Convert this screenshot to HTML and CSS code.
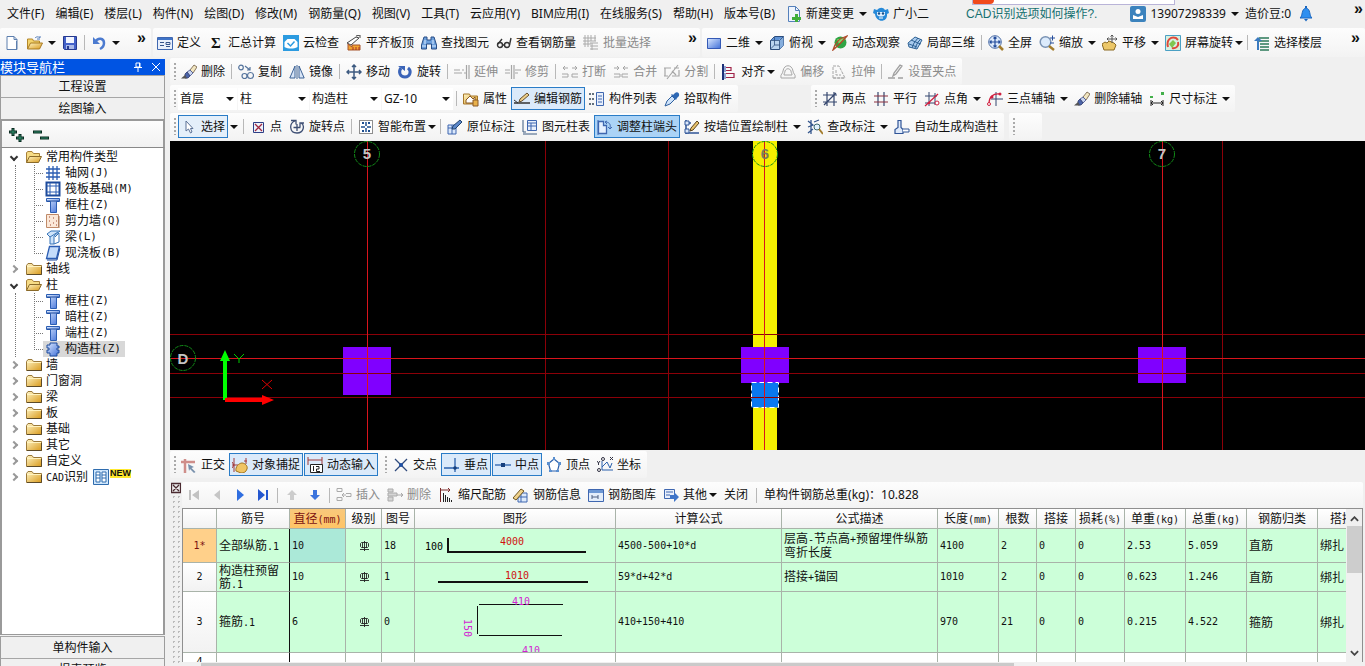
FILE: index.html
```html
<!DOCTYPE html>
<html lang="zh-CN">
<head>
<meta charset="utf-8">
<title>钢筋算量</title>
<link rel="stylesheet" href="styles.css">
</head>
<body>
<svg class="sprite" aria-hidden="true">
  <defs>
    <linearGradient id="g-gold" x1="0" y1="0" x2="1" y2="1"><stop offset="0" stop-color="#fff6c8"/><stop offset="1" stop-color="#d99a1c"/></linearGradient>
    <linearGradient id="g-blue" x1="0" y1="0" x2="1" y2="1"><stop offset="0" stop-color="#dbe9ff"/><stop offset="1" stop-color="#3f6fd8"/></linearGradient>
  </defs>
  <symbol id="new" viewBox="0 0 16 16"><path d="M3 1.500h7l3 3v10H3z" fill="#fff" stroke="#5d7fae"/><path d="M10 1.500v3h3M12.500 6v8.500H5" fill="none" stroke="#5d7fae"/></symbol>
  <symbol id="open" viewBox="0 0 16 16"><path d="M.5 14V4h5l1 2h6v3" fill="#f3d36b" stroke="#b4872a"/><path d="M.5 14l3-6h12l-3 6z" fill="url(#g-gold)" stroke="#a87a20"/><path d="M8 3c2-2 4-1 5 0V1m0 3h-3" fill="none" stroke="#4e79b8"/></symbol>
  <symbol id="opened" viewBox="0 0 16 16"><path d="M.5 13.500V3.500l1.500-1h4l1.500 2h6v3" fill="#f6dc86" stroke="#a88038"/><path d="M.5 13.500l3-6h12l-3 6z" fill="url(#g-gold)" stroke="#8a6a2a"/></symbol>
  <symbol id="folder" viewBox="0 0 16 16"><path d="M.5 13.500V4.500l1.500-2h4l1.500 2h8v9z" fill="url(#g-gold)" stroke="#9a7838"/><path d="M1 5.500h14" stroke="#fff3c0"/><path d="M1 13.500h14.500V6" fill="none" stroke="#5c4a28"/></symbol>
  <symbol id="save" viewBox="0 0 16 16"><path d="M1.500 1.500h13v13h-12l-1-1z" fill="#4361c9" stroke="#26398e"/><path d="M4 2h8v6H4z" fill="#f2f5ff"/><path d="M4 10h8v4H4z" fill="#aab9e8"/><path d="M5 11h2v3H5z" fill="#26398e"/></symbol>
  <symbol id="undo" viewBox="0 0 16 16"><path d="M2 2v7h7z" fill="#4c7bd0"/><path d="M4 7c3-5 9-4 9 1 0 3-2 5-4 6" fill="none" stroke="#4c7bd0" stroke-width="2.500"/></symbol>
  <symbol id="define" viewBox="0 0 16 16"><path d="M.5 2.500h15v12H.5z" fill="#e8effb" stroke="#3f67b0"/><path d="M1 3h14v2H1z" fill="#3f74c8"/><path d="M3 7.500h4m-4 3h4m2-3h4v2H9zm0 4h4" fill="none" stroke="#35548c"/></symbol>
  <symbol id="cloud" viewBox="0 0 16 16"><path d="M0 0h16v16H0z" fill="#2c9be0"/><path d="M1.500 12V7l3-3h7l3 3v5c-4 2-9 2-13 0z" fill="#fff"/><path d="M4.500 8l3 3 4-4.500" fill="none" stroke="#2c9be0" stroke-width="1.500"/></symbol>
  <symbol id="slab" viewBox="0 0 16 16"><path d="M1 8l9-6 3 1-8 7z" fill="#fff" stroke="#444"/><path d="M10 1l4-1v3" fill="none" stroke="#444"/><path d="M2 15V9l4 3v-2h8v5z" fill="#f3a431" stroke="#a5522b"/><path d="M7 15v-3m3 3v-3m3 3v-3" stroke="#a5322b"/></symbol>
  <symbol id="binoc" viewBox="0 0 16 16"><path d="M3 2h3v3h4V2h3l2.500 8v4h-5V9h-5v5h-5v-4z" fill="#6da0dc" stroke="#284d86"/><path d="M1 11h4m6 0h4M4 5v4m8-4v4" stroke="#dbeaff"/></symbol>
  <symbol id="glasses" viewBox="0 0 16 16"><g fill="none" stroke="#333" stroke-width="1.400"><circle cx="4" cy="10" r="2.500"/><circle cx="11" cy="10" r="2.500"/><path d="M2 9l4-5m7.500 6L15 3M6.500 10h2"/></g></symbol>
  <symbol id="batch" viewBox="0 0 16 16"><path d="M2 0v12M5 0v12M8 0v6M0 3h13M0 6h13M0 9h8M12 0v6M7 8h8m-8 3h8m-8 3h8M9 8v7" fill="none" stroke="#aaa"/></symbol>
  <symbol id="rect" viewBox="0 0 16 16"><path d="M1.500 3.500h13v10h-13z" fill="url(#g-blue)" stroke="#3459b5"/></symbol>
  <symbol id="cube" viewBox="0 0 16 16"><path d="M1.500 5.500l4-4h9v9l-4 4h-9z" fill="#b9d3ef" stroke="#2b4c7c"/><path d="M10.500 5.500l4-4v9l-4 4z" fill="#86aedd"/><path d="M2 5l4-3h8l-4 3z" fill="#5f93d6"/><path d="M1.500 5.500h9v9m0-9l4-4M5.500 2v8l-4 4M5.500 10h5" fill="none" stroke="#2b4c7c" stroke-width=".8"/></symbol>
  <symbol id="orbit" viewBox="0 0 16 16"><circle cx="8.500" cy="7.500" r="6" fill="#2fa544"/><path d="M5 4c3 1 5-2 8 0-2 3-4 2-6 5z" fill="#8ad46c"/><path d="M1 15C3 7 8 3 15 1 11 6 7 10 1 15z" fill="none" stroke="#b04b2a" stroke-width="1.300"/></symbol>
  <symbol id="part3d" viewBox="0 0 16 16"><path d="M1 8l7-6 7 3-5 9-8-2z" fill="#a9cbee" stroke="#2f6294"/><path d="M4 5l7 3 3 1M5 13l2-5 4-5M2 9l8 3M8 13l3-6 3-3" fill="none" stroke="#2f6294"/></symbol>
  <symbol id="fit" viewBox="0 0 16 16"><circle cx="7" cy="7" r="6.300" fill="#dce9fa" stroke="#4a6ba4"/><path d="M11 11l4 4" stroke="#a37c2c" stroke-width="2.500"/><path d="M7 2v10M2 7h10M5.500 3.500L7 2l1.500 1.500m-3 7L7 12l1.500-1.500m-5-5L2 7l1.500 1.500m7-3L12 7l-1.500 1.500" fill="none" stroke="#244d9c" stroke-width="1.200"/></symbol>
  <symbol id="zoom" viewBox="0 0 16 16"><circle cx="6.500" cy="7" r="5.300" fill="#dcebfc" stroke="#7a93b4" stroke-width="1.500"/><path d="M10 11l5 4" stroke="#a37c2c" stroke-width="2.500"/><path d="M11 3h5m-2.500-2.500v5M11 8h4" stroke="#244d9c"/></symbol>
  <symbol id="pan" viewBox="0 0 16 16"><path d="M2 15l-2-6 3-2 2 1 2-2 5 2 2 2-2 5z" fill="#ecc768" stroke="#8b6a22"/><path d="M10 0v8M6 4h8M8.500 1.500L10 0l1.500 1.500m-5 1L5 4l1.500 1.500m7-3L15 4l-1.500 1.500" fill="none" stroke="#555"/></symbol>
  <symbol id="screenrot" viewBox="0 0 16 16"><path d="M.5.5h15v15H.5z" fill="#d7f0e0" stroke="#4aa0c4"/><path d="M3 12C1 5 6 1 11 3l2 2m-6 8c5 1 7-3 6-6" fill="none" stroke="#e0483a" stroke-width="2"/><path d="M4 9l4-4 3 3-4 5z" fill="#7fc64f"/></symbol>
  <symbol id="floor" viewBox="0 0 16 16"><path d="M5 3h10M4 6h11M6 9h9M6 12h9M6 15h9" stroke="#2b7a5a" stroke-width="1.500"/><path d="M0 6l4-4 4 4zM3 6h2v9H3z" fill="#3a7ac0"/></symbol>
  <symbol id="change" viewBox="0 0 16 16"><path d="M2.500.5h7l4 4v11h-11z" fill="#eef4fd" stroke="#5580bb"/><path d="M9.500.5v4h4" fill="none" stroke="#5580bb"/><path d="M9 8h3v3h3v3h-3v2H9v-2H6v-3h3z" fill="#3fae3b"/></symbol>
  <symbol id="robot" viewBox="0 0 16 16"><path d="M1 3l3 1c3-3 6-3 8 0l3-1 1 4-2 1c1 9-11 9-12 0L0 7z" fill="#2689d8"/><path d="M4 6h8v3c-2 2-6 2-8 0z" fill="#dff0ff"/><circle cx="6" cy="7.500" r="1.200" fill="#174f88"/><circle cx="10" cy="7.500" r="1.200" fill="#174f88"/><path d="M6 12h4" stroke="#fff"/></symbol>
  <symbol id="user" viewBox="0 0 16 16"><rect width="16" height="16" rx="2" fill="#3c83bd"/><circle cx="8" cy="5.500" r="2.500" fill="#fff"/><path d="M3 13V9l5 2 5-2v4z" fill="#fff"/></symbol>
  <symbol id="bell" viewBox="0 0 16 16"><path d="M2 12c3-2 1-9 6-10 5 1 3 8 6 10z" fill="#2e8ff0" stroke="#1a67c0"/><path d="M6 13h4l-2 2.500z" fill="#1a67c0"/><path d="M8 0v2" stroke="#1a67c0" stroke-width="2"/></symbol>
  <symbol id="brush" viewBox="0 0 16 16"><path d="M9 6l4-5 3 2-4 6z" fill="#f2e6c0" stroke="#6a5740" stroke-width=".8"/><path d="M6 8l3-2 3 3-3 3z" fill="#c8d4ee" stroke="#44508a" stroke-width=".8"/><path d="M4 10l2-2 3 4-2 2H4z" fill="#4b64a8" stroke="#303c70" stroke-width=".8"/><path d="M0 14.500l4-3.500 2 3.500z" fill="#555"/></symbol>
  <symbol id="copy" viewBox="0 0 16 16"><g fill="none" stroke="#55749d" stroke-width="1.200"><circle cx="3" cy="3.500" r="2.300"/><circle cx="6.500" cy="12" r="2.500"/><circle cx="12.500" cy="11.500" r="3"/><path d="M7 2l5 4m0-3v3H9"/></g></symbol>
  <symbol id="mirror" viewBox="0 0 16 16"><path d="M6 2v12H.8zM10 2v12h5.200z" fill="#d8e5f7" stroke="#3d6295"/><path d="M8 1v14" stroke="#3d6295"/></symbol>
  <symbol id="move" viewBox="0 0 16 16"><path d="M8 1v14M1 8h14M6 3l2-2 2 2M6 13l2 2 2-2M3 6L1 8l2 2m10-4l2 2-2 2" fill="none" stroke="#3d5a80" stroke-width="1.500"/></symbol>
  <symbol id="rotate" viewBox="0 0 16 16"><path d="M4 4c-3 4-1 9 4 9s7-6 3-9" fill="none" stroke="#3b64b8" stroke-width="3"/><path d="M1 2h7v5z" fill="#3b64b8"/></symbol>
  <symbol id="extend" viewBox="0 0 16 16"><path d="M0 6h6m-6 3h8M8 6h2m0 3h2M12.500 1v14M15 1v14" stroke="#a6a6a6" stroke-width="1.200"/></symbol>
  <symbol id="trim" viewBox="0 0 16 16"><path d="M6.500 1v14M9 1v14M0 6h5m-5 3h5m5-3h6m-6 3h3" stroke="#a6a6a6" stroke-width="1.200"/></symbol>
  <symbol id="break" viewBox="0 0 16 16"><path d="M1 4h5M3 2L1 4l2 2m7-2h5m-2-2l2 2-2 2M0 10h6v3H0m16-3h-6v3h6" fill="none" stroke="#a6a6a6"/></symbol>
  <symbol id="join" viewBox="0 0 16 16"><path d="M1 4h5M4 2l2 2-2 2m6-2h5m-3-2l-2 2 2 2M1 10h6v3H1m14-3H9v3h6" fill="none" stroke="#a6a6a6"/></symbol>
  <symbol id="split" viewBox="0 0 16 16"><path d="M0 4h7m3 0h5M0 12h4m4 0h7V6M1 4v8m2 3L14 1M8 7l4 4" fill="none" stroke="#a6a6a6" stroke-width="1.200"/></symbol>
  <symbol id="align" viewBox="0 0 16 16"><path d="M2 0v16" stroke="#1c2f78" stroke-width="2"/><path d="M5 3.500h5v3H5M5 9.500h8v4H5" fill="none" stroke="#a02348" stroke-width="1.200"/><path d="M4 2v6m0 1v6" stroke="#2a4ea8"/></symbol>
  <symbol id="offset" viewBox="0 0 16 16"><g fill="none" stroke="#a6a6a6"><path d="M1 14c-1-4 2-4 2-7 1-7 9-7 10 0 0 3 3 3 2 7z"/><path d="M4 11c0-2 1-2 1-4 1-3 5-3 6 0 0 2 1 2 1 4z"/></g></symbol>
  <symbol id="stretch" viewBox="0 0 16 16"><path d="M2 14V2h6l6 12zM2 14h12M5 6v5h5" fill="none" stroke="#a6a6a6" stroke-dasharray="3 1"/></symbol>
  <symbol id="grip" viewBox="0 0 16 16"><path d="M0 14h7m3 0h5M5 12l1-3 6-8 2 1-6 8z" fill="none" stroke="#a0a0a0" stroke-width="1.300"/></symbol>
  <symbol id="props" viewBox="0 0 16 16"><path d="M.5 13V3h6l1 2h7v8z" fill="url(#g-gold)" stroke="#a6772a"/><path d="M3 9l4-4 3 3 2-2v6H3z" fill="#fff" stroke="#8a5b28"/><path d="M10 9h5v6h-5z" fill="#e9b14a" stroke="#8a5b28"/></symbol>
  <symbol id="rebar" viewBox="0 0 16 16"><path d="M0 12h16" stroke="#333" stroke-width="1.500"/><path d="M5 11l1-3 7-6 2 2-7 6z" fill="#edcf8a" stroke="#665030"/><path d="M0 9l4 3" stroke="#333"/></symbol>
  <symbol id="list" viewBox="0 0 16 16"><path d="M0 3h2m1 0h2M0 8h2m1 0h2m-5 5h2m1 0h2" stroke="#345" stroke-width="1.500"/><path d="M7.500 1.500h7v13h-7z" fill="#e8effb" stroke="#3f67b0"/><path d="M9 5h4M9 8h4m-4 3h4" stroke="#3f67b0"/></symbol>
  <symbol id="picker" viewBox="0 0 16 16"><path d="M1 15l2-5 5-5 3 3-5 5z" fill="#cfe3fa" stroke="#2d5f9e"/><path d="M7 4l5 5 1-2 2-2c1-3-2-5-4-3L9 4 8 3z" fill="#2e68b4"/></symbol>
  <symbol id="twopt" viewBox="0 0 16 16"><path d="M1 4h14M1 11h14M5 1v14m7-14v14M2 14L14 2" fill="none" stroke="#34466e" stroke-width="1.200"/></symbol>
  <symbol id="parallel" viewBox="0 0 16 16"><path d="M5 1v14M11 1v14" stroke="#34466e" stroke-width="1.200"/><path d="M1 5h14M1 11h14" stroke="#8c3040" stroke-width="1.200"/></symbol>
  <symbol id="angle" viewBox="0 0 16 16"><path d="M1 5h12M5 1v14M1 12h14M11 2v12" stroke="#34466e" fill="none"/><path d="M1 15L14 3" stroke="#d02040" stroke-width="1.300"/><circle cx="13" cy="12" r="2" fill="#fff" stroke="#d02040"/><circle cx="5" cy="12" r="1.300" fill="#d02040"/></symbol>
  <symbol id="threept" viewBox="0 0 16 16"><path d="M9 1v14M4 8h12" stroke="#34466e"/><path d="M2 13C2 6 6 2 13 3" fill="none" stroke="#d02040" stroke-width="1.400"/><circle cx="2" cy="13" r="1.500" fill="#fff" stroke="#d02040"/><circle cx="5" cy="6" r="1.500" fill="#d02040"/><circle cx="13" cy="3" r="1.500" fill="#d02040"/></symbol>
  <symbol id="dim" viewBox="0 0 16 16"><path d="M2 9v6m12-6v6M2 12h12M4 10l-2 2 2 2m8-4l2 2-2 2" fill="none" stroke="#222"/><path d="M1 5h3v2H1zm11-4h3v3h-3z" fill="#43b04a"/></symbol>
  <symbol id="cursor" viewBox="0 0 16 16"><path d="M5 2v10l2.500-2 2 4 1.500-1-1.500-3.500H12z" fill="#fff" stroke="#5b7196"/></symbol>
  <symbol id="point" viewBox="0 0 16 16"><path d="M3.500 3.500h10v10h-10z" fill="#eef3fc" stroke="#2d3f86"/><path d="M5 5l7 7m0-7l-7 7" stroke="#a02840" stroke-width="1.300"/></symbol>
  <symbol id="rotpoint" viewBox="0 0 16 16"><path d="M6 2C0 4 0 14 8 14c7 0 8-8 4-10M2 1.500h5v4M15 4h-4v4M8 5v7M4.500 8.500h7" fill="none" stroke="#3e4f74" stroke-width="1.300"/></symbol>
  <symbol id="smart" viewBox="0 0 16 16"><path d="M1.500 1.500h13v13h-13z" fill="#fff" stroke="#222" stroke-dasharray="1 1"/><path d="M8 3v4m0 2v4M3 8h4m2 0h4" stroke="#1c4d8f" stroke-width="1.500"/><path d="M4 3h2v2H4zm6 0h2v2h-2zm-6 8h2v2H4zm6 0h2v2h-2z" fill="#1c4d8f"/></symbol>
  <symbol id="inplace" viewBox="0 0 16 16"><path d="M1 6h8v9H1z" fill="#dbe8fa" stroke="#3f67b0"/><path d="M1 9h8M5 6v9" stroke="#3f67b0"/><path d="M5 10l1-3 7-6 2 2-7 7z" fill="#5c87c9" stroke="#23446f"/></symbol>
  <symbol id="coltable" viewBox="0 0 16 16"><path d="M1 1v12M1 15h14M4 13h-3" stroke="#3d5a80" fill="none"/><path d="M5.500 1.500h9v10h-9z" fill="#e8effb" stroke="#3f67b0"/><path d="M6 4h8M6 7h8M9 4v7" stroke="#3f67b0"/></symbol>
  <symbol id="adjust" viewBox="0 0 16 16"><path d="M1.500 2.500h5v4h3v8h-8z" fill="#e5f0ff" stroke="#3f67b0" stroke-width="1.300"/><path d="M8 3c4 0 6 2 5 6m-3-7L8 3l2 2m1 3l2 2 2-2M1 1v15" fill="none" stroke="#3f67b0"/></symbol>
  <symbol id="bywall" viewBox="0 0 16 16"><path d="M2 1v14M2 4h5M2 14h13" stroke="#2f5497" stroke-width="1.500"/><path d="M1 2h4v4H1zm0 8h4v4H1z" fill="#dce8fa" stroke="#2f5497"/><path d="M6 12l1-3 6-7 2 2-6 7z" fill="#e9c36b" stroke="#5b4520"/></symbol>
  <symbol id="check" viewBox="0 0 16 16"><path d="M1 2l5 4-5 2m0 6l5-4M4 1v14M7 3l5-2" fill="none" stroke="#34568c" stroke-width="1.300"/><circle cx="10" cy="8" r="3" fill="#e2f2ff" stroke="#3d6a70"/><path d="M12 10l4 5" stroke="#a37c2c" stroke-width="2"/></symbol>
  <symbol id="autogen" viewBox="0 0 16 16"><path d="M4 1.500h3v7l2 2v4H1v-4l3-2z" fill="#dfeafa" stroke="#2f5497" stroke-width="1.200"/><path d="M9 10h6v3H9" fill="#fff" stroke="#2f5497"/></symbol>
  <symbol id="ortho" viewBox="0 0 16 16"><path d="M4 16V2m-4 3h14" stroke="#cf8e8a" stroke-width="2.500"/><path d="M7 7l6 3-2.500 1 4 4-1.500 1-4-4-1 2z" fill="#7890ac"/></symbol>
  <symbol id="osnap" viewBox="0 0 16 16"><path d="M2 1v14M0 8h6M14 1v6" stroke="#a03838"/><path d="M4 14c-1-4 3-8 6-8s6 3 5 6-3 4-6 4z" fill="#f0c463" stroke="#a37520"/><path d="M12 4h3M0 5l2 3-2 3" stroke="#a03838" fill="none"/></symbol>
  <symbol id="dyn" viewBox="0 0 16 16"><path d="M1 0v8m14-8v8M1 3h14" stroke="#a03838"/><path d="M3.500 7.500h12v8h-12z" fill="#fff" stroke="#222"/><path d="M6.500 9v5M9 9.500h3V12H9.500v2.500H13" fill="none" stroke="#222"/></symbol>
  <symbol id="cross" viewBox="0 0 16 16"><path d="M2 2l12 12M14 2L2 14" stroke="#2f4a7c" stroke-width="1.300"/><circle cx="8" cy="8" r="2" fill="#1d4fa4"/></symbol>
  <symbol id="perp" viewBox="0 0 16 16"><path d="M11 1v14M0 11h15" stroke="#2b61ad" stroke-width="1.300"/><circle cx="11" cy="11" r="1.800" fill="#16407e"/></symbol>
  <symbol id="mid" viewBox="0 0 16 16"><path d="M0 8h16" stroke="#2b61ad" stroke-width="1.300"/><path d="M6 6h4v4H6z" fill="#16407e"/></symbol>
  <symbol id="vertex" viewBox="0 0 16 16"><path d="M8 2l5.500 4.500-2 7.500h-7l-2-7.500z" fill="#fff" stroke="#2b61ad" stroke-width="1.200"/><path d="M7 0h2v3H7zM1 5h3v3H1zm11 0h3v3h-3zM3 13h3v2H3zm7 0h3v2h-3z" fill="#5a8fcf"/></symbol>
  <symbol id="coord" viewBox="0 0 16 16"><path d="M5 4v9h11M5 10l5-5 3 6 2-5" fill="none" stroke="#2b61ad"/><path d="M0 4l1.500 2L3 4M1.500 6v2M13 0l3 3m0-3l-3 3" stroke="#334" fill="none"/><circle cx="2" cy="13" r="1.500" fill="none" stroke="#334"/><circle cx="6" cy="2" r="1.500" fill="none" stroke="#334"/></symbol>
  <symbol id="first" viewBox="0 0 16 16"><path d="M3 3h2v10H3zm10 0v10L6 8z" fill="#c2c2c2"/></symbol>
  <symbol id="prev" viewBox="0 0 16 16"><path d="M11 3v10L5 8z" fill="#c6c6c6"/></symbol>
  <symbol id="next" viewBox="0 0 16 16"><path d="M5 2v12l7-6z" fill="#2f6ee0"/></symbol>
  <symbol id="last" viewBox="0 0 16 16"><path d="M3 2v12l7-6zM11 3h2v10h-2z" fill="#2457cf"/></symbol>
  <symbol id="up" viewBox="0 0 16 16"><path d="M8 3l5 5h-3v5H6V8H3z" fill="#ccc"/></symbol>
  <symbol id="down" viewBox="0 0 16 16"><path d="M8 13l5-5h-3V3H6v5H3z" fill="#3c74dd"/></symbol>
  <symbol id="insert" viewBox="0 0 16 16"><path d="M1 1.500h5v3H1zm0 9h5v3H1zm9-4h5v3h-5M6 8h4M8 6L6 8l2 2" fill="none" stroke="#aaa"/></symbol>
  <symbol id="remove" viewBox="0 0 16 16"><path d="M1 2h5v3H1zm0 8h5v4H1zm0-4h9v3H1zm9 2h6m-2-2l2 2-2 2" fill="#d6d6d6" stroke="#aaa"/></symbol>
  <symbol id="scale" viewBox="0 0 16 16"><path d="M2.500 1v14M3 3h9m-2-2l2 2-2 2" stroke="#7c2a2a" fill="none"/><path d="M5.500 15V6m2 9V8m2 7v-5m2 5v-4m2 4v-2" stroke="#222"/></symbol>
  <symbol id="info" viewBox="0 0 16 16"><path d="M5 6h9v9H5z" fill="#dce9fa" stroke="#3f67b0"/><path d="M8 6v9M5 10h9" stroke="#3f67b0"/><path d="M0 11l8-9 3 2-8 9z" fill="#f0d28a" stroke="#6f5520"/></symbol>
  <symbol id="lib" viewBox="0 0 16 16"><path d="M.5 2.500h15v12H.5z" fill="#e3edfa" stroke="#3f67b0"/><path d="M1 3h14v3H1z" fill="#6c97d4"/><path d="M4 8v4m0-2h6m0-2v4" fill="none" stroke="#4c5e80"/></symbol>
  <symbol id="other" viewBox="0 0 16 16"><path d="M1.500 2.500h10v9h-10z" fill="#e8effb" stroke="#3f67b0"/><path d="M3 5h7M3 8h4" stroke="#3f67b0"/><path d="M7 8h4V5l5 5-5 5v-3H7z" fill="#3f74c8"/></symbol>
  <symbol id="gridaxis" viewBox="0 0 16 16"><path d="M4 1v14M8 1v14M12 1v14M1 4h14M1 8h14M1 12h14" stroke="#2b5db3" stroke-width="1.300"/></symbol>
  <symbol id="raft" viewBox="0 0 16 16"><path d="M1.500 1.500h13v13h-13z" fill="#fff" stroke="#1d4b9c" stroke-width="2"/><path d="M5 2v12m6-12v12M2 5h12M2 11h12" stroke="#2b5db3"/></symbol>
  <symbol id="column" viewBox="0 0 16 16"><path d="M1.500 1.500h13v3h-3v11h-6v-11h-4z" fill="url(#g-blue)" stroke="#2b5db3"/><path d="M2 4h12" stroke="#1d4b9c"/></symbol>
  <symbol id="wall" viewBox="0 0 16 16"><path d="M1.500 1.500h12v13h-12z" fill="#fbe8d8" stroke="#c08a68"/><path d="M4 4h1m3 1h1m2 3h1M4 8h1m3 2h1m-4 2h1m5 0h1" stroke="#a04830"/><path d="M14 3v12" stroke="#a87858"/></symbol>
  <symbol id="beam" viewBox="0 0 16 16"><path d="M2 5l4-3h9L9 7v8H5V8z" fill="#cfe4fa" stroke="#3774b8"/><path d="M5 8l8-5M10 8l4-4v9l-5 2" fill="none" stroke="#3774b8"/></symbol>
  <symbol id="plate" viewBox="0 0 16 16"><path d="M4.500 1.500h10l-3 12h-10z" fill="#c4dcfa" stroke="#2b5db3" stroke-width="1.300"/><path d="M2 15h10l3-12" fill="none" stroke="#1d4b9c"/></symbol>
  <symbol id="struct" viewBox="0 0 16 16"><path d="M5 2h7v3h2v2h-2v2h2v3h-2v3H5v-3H2V9h2V7H2V4h3z" fill="url(#g-blue)" stroke="#1d4b9c"/></symbol>
  <symbol id="cad" viewBox="0 0 16 16"><path d="M.5.5h15v15H.5z" fill="#cfe6fb" stroke="#2f6cae"/><path d="M3 3h4v10H3zm6 0h4v10H9zM3 6h4m2 0h4M3 9h4m2 0h4" fill="#fff" stroke="#2f6cae"/></symbol>
  <symbol id="steel" viewBox="0 0 12 12"><path d="M6.500 1v10M4.500 3v5M8.500 3v5M3.500 2.500h6l1 1v3l-1 1h-6l-1-1v-3zM2 9.500h9" fill="none" stroke="#222" stroke-width=".9"/></symbol>
</svg>

<header class="menubar">
  <nav class="menus">
    <button>文件(F)</button><button>编辑(E)</button><button>楼层(L)</button><button>构件(N)</button><button>绘图(D)</button><button>修改(M)</button><button>钢筋量(Q)</button><button>视图(V)</button><button>工具(T)</button><button>云应用(Y)</button><button>BIM应用(I)</button><button>在线服务(S)</button><button>帮助(H)</button><button>版本号(B)</button>
  </nav>
  <div class="group">
    <button class="tb"><svg><use href="#change"/></svg>新建变更</button><button class="split" aria-label="新建变更选项"><i></i></button>
    <button class="tb"><svg><use href="#robot"/></svg>广小二</button>
  </div>
  <a class="tip" href="#"><span class="mono">CAD</span>识别选项如何操作<span class="mono">?.</span></a>
  <div class="group account">
    <button class="tb"><svg><use href="#user"/></svg>13907298339</button><button class="split" aria-label="账户"><i></i></button>
    <button class="tb">造价豆:0</button>
    <button class="tb" aria-label="通知"><svg><use href="#bell"/></svg></button>
  </div>
  <button class="more end" aria-label="更多">»</button>
  <div class="popup"></div>
</header>

<div class="mainbar">
  <div class="bar">
    <button class="tb" aria-label="新建"><svg><use href="#new"/></svg></button>
    <button class="tb" aria-label="打开"><svg><use href="#open"/></svg></button><button class="split" aria-label="最近"><i></i></button>
    <button class="tb" aria-label="保存"><svg><use href="#save"/></svg></button><hr>
    <button class="tb" aria-label="撤销"><svg><use href="#undo"/></svg></button><button class="split" aria-label="撤销列表"><i></i></button>
    <button class="more near" aria-label="更多">»</button>
  </div>
  <div class="bar">
    <button class="tb"><svg><use href="#define"/></svg>定义</button>
    <button class="tb"><b class="sigma">Σ</b>汇总计算</button>
    <button class="tb"><svg><use href="#cloud"/></svg>云检查</button>
    <button class="tb"><svg><use href="#slab"/></svg>平齐板顶</button>
    <button class="tb"><svg><use href="#binoc"/></svg>查找图元</button>
    <button class="tb"><svg><use href="#glasses"/></svg>查看钢筋量</button>
    <button class="tb" disabled><svg><use href="#batch"/></svg>批量选择</button>
    <button class="more far" aria-label="更多">»</button>
  </div>
  <div class="bar grow">
    <button class="tb"><svg><use href="#rect"/></svg>二维</button><button class="split" aria-label="视图模式"><i></i></button>
    <button class="tb"><svg><use href="#cube"/></svg>俯视</button><button class="split" aria-label="视角"><i></i></button>
    <button class="tb"><svg><use href="#orbit"/></svg>动态观察</button>
    <button class="tb"><svg><use href="#part3d"/></svg>局部三维</button><hr>
    <button class="tb"><svg><use href="#fit"/></svg>全屏</button>
    <button class="tb"><svg><use href="#zoom"/></svg>缩放</button><button class="split" aria-label="缩放选项"><i></i></button>
    <button class="tb"><svg><use href="#pan"/></svg>平移</button><button class="split" aria-label="平移选项"><i></i></button>
    <button class="tb"><svg><use href="#screenrot"/></svg>屏幕旋转<i></i></button><hr>
    <button class="tb"><svg><use href="#floor"/></svg>选择楼层</button>
    <button class="more end" aria-label="更多">»</button>
  </div>
</div>

<div class="workspace">
  <aside class="nav">
    <h1>模块导航栏<button aria-label="固定"><svg viewBox="0 0 10 10"><path d="M3 1h4v4H3zM1 5.500h8M5 6v4M6.500 1v4" fill="none" stroke="#fff"/></svg></button><button aria-label="关闭"><svg viewBox="0 0 10 10"><path d="M1 1l8 8M9 1L1 9" fill="none" stroke="#fff"/></svg></button></h1>
    <button class="section">工程设置</button>
    <button class="section">绘图输入</button>
    <div class="treetools">
      <button aria-label="全部展开"><svg viewBox="0 0 18 16"><path d="M1 5h8M5 1v8M8 11h8m-4-4v8" stroke="#0a2a20" stroke-width="3"/><path d="M2 5h6M5 2v6m4 3h6m-3-3v6" stroke="#2f8f6c"/></svg></button>
      <button aria-label="全部折叠"><svg viewBox="0 0 18 16"><path d="M1 5h9M8 11h9" stroke="#0a2a20" stroke-width="3"/><path d="M2 5h7m0 6h7" stroke="#2f8f6c"/></svg></button>
    </div>
    <ul class="tree">
      <li class="open"><span class="row"><s></s><svg><use href="#opened"/></svg>常用构件类型</span>
        <ul>
          <li><span class="leaf"><svg><use href="#gridaxis"/></svg>轴网<span class="mono">(J)</span></span></li>
          <li><span class="leaf"><svg><use href="#raft"/></svg>筏板基础<span class="mono">(M)</span></span></li>
          <li><span class="leaf"><svg><use href="#column"/></svg>框柱<span class="mono">(Z)</span></span></li>
          <li><span class="leaf"><svg><use href="#wall"/></svg>剪力墙<span class="mono">(Q)</span></span></li>
          <li><span class="leaf"><svg><use href="#beam"/></svg>梁<span class="mono">(L)</span></span></li>
          <li><span class="leaf"><svg><use href="#plate"/></svg>现浇板<span class="mono">(B)</span></span></li>
        </ul>
      </li>
      <li><span class="row"><s></s><svg><use href="#folder"/></svg>轴线</span></li>
      <li class="open"><span class="row"><s></s><svg><use href="#opened"/></svg>柱</span>
        <ul>
          <li><span class="leaf"><svg><use href="#column"/></svg>框柱<span class="mono">(Z)</span></span></li>
          <li><span class="leaf"><svg><use href="#column"/></svg>暗柱<span class="mono">(Z)</span></span></li>
          <li><span class="leaf"><svg><use href="#column"/></svg>端柱<span class="mono">(Z)</span></span></li>
          <li><span class="leaf chosen"><svg><use href="#struct"/></svg>构造柱<span class="mono">(Z)</span></span></li>
        </ul>
      </li>
      <li><span class="row"><s></s><svg><use href="#folder"/></svg>墙</span></li>
      <li><span class="row"><s></s><svg><use href="#folder"/></svg>门窗洞</span></li>
      <li><span class="row"><s></s><svg><use href="#folder"/></svg>梁</span></li>
      <li><span class="row"><s></s><svg><use href="#folder"/></svg>板</span></li>
      <li><span class="row"><s></s><svg><use href="#folder"/></svg>基础</span></li>
      <li><span class="row"><s></s><svg><use href="#folder"/></svg>其它</span></li>
      <li><span class="row"><s></s><svg><use href="#folder"/></svg>自定义</span></li>
      <li><span class="row"><s></s><svg><use href="#folder"/></svg><span><span class="mono">CAD</span>识别</span><svg class="after"><use href="#cad"/></svg><em>NEW</em></span></li>
    </ul>
    <button class="section">单构件输入</button>
    <button class="section last">报表预览</button>
  </aside>

  <main>
    <div class="line">
      <div class="bar">
        <span class="handle"></span>
        <button class="tb"><svg><use href="#brush"/></svg>删除</button><hr>
        <button class="tb"><svg><use href="#copy"/></svg>复制</button>
        <button class="tb"><svg><use href="#mirror"/></svg>镜像</button><hr>
        <button class="tb"><svg><use href="#move"/></svg>移动</button>
        <button class="tb"><svg><use href="#rotate"/></svg>旋转</button><hr>
        <button class="tb" disabled><svg><use href="#extend"/></svg>延伸</button>
        <button class="tb" disabled><svg><use href="#trim"/></svg>修剪</button><hr>
        <button class="tb" disabled><svg><use href="#break"/></svg>打断</button>
        <button class="tb" disabled><svg><use href="#join"/></svg>合并</button>
        <button class="tb" disabled><svg><use href="#split"/></svg>分割</button><hr>
        <button class="tb"><svg><use href="#align"/></svg>对齐<i></i></button>
        <button class="tb" disabled><svg><use href="#offset"/></svg>偏移</button>
        <button class="tb" disabled><svg><use href="#stretch"/></svg>拉伸</button><hr>
        <button class="tb" disabled><svg><use href="#grip"/></svg>设置夹点</button>
      </div>
    </div>
    <div class="line">
      <div class="bar">
        <span class="handle"></span>
        <label class="pick short"><select aria-label="楼层"><option>首层</option></select><i></i></label>
        <label class="pick"><select aria-label="构件类型"><option>柱</option></select><i></i></label>
        <label class="pick"><select aria-label="柱类型"><option>构造柱</option></select><i></i></label>
        <label class="pick"><select aria-label="构件"><option>GZ-10</option></select><i></i></label><hr>
        <button class="tb"><svg><use href="#props"/></svg>属性</button>
        <button class="tb on"><svg><use href="#rebar"/></svg>编辑钢筋</button>
        <button class="tb"><svg><use href="#list"/></svg>构件列表</button>
        <button class="tb"><svg><use href="#picker"/></svg>拾取构件</button>
      </div>
      <div class="bar axis">
        <span class="handle"></span>
        <button class="tb"><svg><use href="#twopt"/></svg>两点</button>
        <button class="tb"><svg><use href="#parallel"/></svg>平行</button>
        <button class="tb"><svg><use href="#angle"/></svg>点角</button><button class="split" aria-label="点角选项"><i></i></button>
        <button class="tb"><svg><use href="#threept"/></svg>三点辅轴</button><button class="split" aria-label="三点辅轴选项"><i></i></button>
        <button class="tb"><svg><use href="#brush"/></svg>删除辅轴</button>
        <button class="tb"><svg><use href="#dim"/></svg>尺寸标注</button><button class="split" aria-label="尺寸标注选项"><i></i></button>
      </div>
    </div>
    <div class="line">
      <div class="bar">
        <span class="handle"></span>
        <button class="tb on pale"><svg><use href="#cursor"/></svg>选择</button><button class="split" aria-label="选择选项"><i></i></button><hr>
        <button class="tb"><svg><use href="#point"/></svg>点</button>
        <button class="tb"><svg><use href="#rotpoint"/></svg>旋转点</button><hr>
        <button class="tb"><svg><use href="#smart"/></svg>智能布置<i></i></button><hr>
        <button class="tb"><svg><use href="#inplace"/></svg>原位标注</button>
        <button class="tb"><svg><use href="#coltable"/></svg>图元柱表</button>
        <button class="tb on deep"><svg><use href="#adjust"/></svg>调整柱端头</button>
        <button class="tb"><svg><use href="#bywall"/></svg>按墙位置绘制柱</button><button class="split" aria-label="绘制柱选项"><i></i></button>
        <button class="tb"><svg><use href="#check"/></svg>查改标注</button><button class="split" aria-label="查改标注选项"><i></i></button>
        <button class="tb"><svg><use href="#autogen"/></svg>自动生成构造柱</button>
      </div>
      <div class="bar stub"><span class="handle"></span></div>
    </div>

    <svg class="canvas" viewBox="0 0 1195 309" preserveAspectRatio="xMinYMin slice">
      <path d="M583 0h24v309h-24z" fill="#f4f000"/>
      <path d="M173 206h48v48h-48zM571 206h48v36h-48zM968 206h48v36h-48z" fill="#8000ff"/>
      <path d="M581.500 241.500h27v25h-27z" fill="#0a78f0" stroke="#fff" stroke-dasharray="5 3"/>
      <path d="M375.500 0v309M498.500 0v309M1052.500 0v309M0 193.500h1195M0 232.500h1195M0 256.500h1195" class="grid-dark"/>
      <path d="M197.500 0v309M594.500 0v309M992.500 0v309M0 217.500h1195" class="grid-red"/>
      <g class="bubble"><circle cx="197" cy="13" r="12.500"/><circle cx="595" cy="13" r="12.500"/><circle cx="992" cy="13" r="12.500"/><circle cx="13" cy="217" r="12.500"/></g>
      <g class="axis-name"><text x="197" y="18">5</text><text x="595" y="18" class="dim">6</text><text x="992" y="18">7</text><text x="13" y="223">D</text></g>
      <path d="M53 220v39h4v-39h3l-5-11-5 11z" fill="#0f0"/>
      <path d="M57 257h35v-3l12 5-12 5v-3H55v-4z" fill="#f00"/>
      <path d="M64 213l5 5 5-5M69 218v4" fill="none" stroke="#0c0"/>
      <path d="M92 239l10 9M102 239l-10 9" stroke="#d00"/>
    </svg>

    <div class="line snap">
      <div class="bar">
        <span class="handle"></span>
        <button class="tb"><svg><use href="#ortho"/></svg>正交</button>
        <button class="tb on"><svg><use href="#osnap"/></svg>对象捕捉</button><button class="tb on"><svg><use href="#dyn"/></svg>动态输入</button>
        <span class="handle wide"></span>
        <button class="tb"><svg><use href="#cross"/></svg>交点</button>
        <button class="tb on"><svg><use href="#perp"/></svg>垂点</button><button class="tb on"><svg><use href="#mid"/></svg>中点</button>
        <button class="tb"><svg><use href="#vertex"/></svg>顶点</button>
        <button class="tb"><svg><use href="#coord"/></svg>坐标</button>
      </div>
    </div>

    <section class="dock">
      <div class="gutter"><button aria-label="关闭面板"><svg viewBox="0 0 10 10"><path d="M.5.5h9v9h-9zM2 2l6 6M8 2L2 8" fill="#eee" stroke="#4a2a30" stroke-width="1.300"/></svg></button></div>
      <div class="dockbody">
        <div class="bar records">
          <button class="tb" disabled aria-label="首条"><svg><use href="#first"/></svg></button>
          <button class="tb" disabled aria-label="上一条"><svg><use href="#prev"/></svg></button>
          <button class="tb" aria-label="下一条"><svg><use href="#next"/></svg></button>
          <button class="tb" aria-label="末条"><svg><use href="#last"/></svg></button><hr>
          <button class="tb" disabled aria-label="上移"><svg><use href="#up"/></svg></button>
          <button class="tb" aria-label="下移"><svg><use href="#down"/></svg></button><hr>
          <button class="tb" disabled><svg><use href="#insert"/></svg>插入</button>
          <button class="tb" disabled><svg><use href="#remove"/></svg>删除</button>
          <button class="tb"><svg><use href="#scale"/></svg>缩尺配筋</button>
          <button class="tb"><svg><use href="#info"/></svg>钢筋信息</button>
          <button class="tb"><svg><use href="#lib"/></svg>钢筋图库</button>
          <button class="tb"><svg><use href="#other"/></svg>其他<i></i></button>
          <button class="tb shut">关闭</button><hr>
          <span class="total">单构件钢筋总重(kg)：10.828</span>
        </div>
        <div class="sheet">
          <div class="clip">
            <table>
              <colgroup><col class="w34"><col class="w73"><col class="w56"><col class="w36"><col class="w33"><col class="w201"><col class="w166"><col class="w156"><col class="w61"><col class="w38"><col class="w39"><col class="w49"><col class="w61"><col class="w61"><col class="w71"><col class="w71"></colgroup>
              <thead><tr><th></th><th>筋号</th><th class="hot">直径<span class="mono">(mm)</span></th><th>级别</th><th>图号</th><th>图形</th><th>计算公式</th><th>公式描述</th><th>长度<span class="mono">(mm)</span></th><th>根数</th><th>搭接</th><th>损耗<span class="mono">(%)</span></th><th>单重<span class="mono">(kg)</span></th><th>总重<span class="mono">(kg)</span></th><th>钢筋归类</th><th>搭接形式</th></tr></thead>
              <tbody>
                <tr><th class="hot mono">1*</th><td class="name">全部纵筋<span class="mono">.1</span></td><td class="mono cell">10</td><td class="mid"><svg class="steel"><use href="#steel"/></svg></td><td class="mono">18</td>
                  <td class="fig"><svg width="200" height="33"><path d="M33 9v14h138" class="bar-thick"/><text x="10" y="21">100</text><text x="85" y="16" class="red">4000</text></svg></td>
                  <td class="mono">4500-500+10*d</td><td>层高<span class="mono">-</span>节点高<span class="mono">+</span>预留埋件纵筋弯折长度</td><td class="mono">4100</td><td class="mono">2</td><td class="mono">0</td><td class="mono">0</td><td class="mono">2.53</td><td class="mono">5.059</td><td>直筋</td><td>绑扎</td></tr>
                <tr><th class="mono">2</th><td class="name">构造柱预留筋<span class="mono">.1</span></td><td class="mono">10</td><td class="mid"><svg class="steel"><use href="#steel"/></svg></td><td class="mono">1</td>
                  <td class="fig"><svg width="200" height="28"><path d="M23 19h150" class="bar-thick"/><text x="90" y="16" class="red">1010</text></svg></td>
                  <td class="mono">59*d+42*d</td><td>搭接<span class="mono">+</span>锚固</td><td class="mono">1010</td><td class="mono">2</td><td class="mono">0</td><td class="mono">0</td><td class="mono">0.623</td><td class="mono">1.246</td><td>直筋</td><td>绑扎</td></tr>
                <tr><th class="mono">3</th><td class="name">箍筋<span class="mono">.1</span></td><td class="mono">6</td><td class="mid"><svg class="steel"><use href="#steel"/></svg></td><td class="mono">0</td>
                  <td class="fig"><svg width="200" height="60"><path d="M64 12.500h84M62.500 14v28M64 43.500h83" class="bar-thin"/><text x="97" y="13" class="pink">410</text><text class="pink" transform="translate(49 27) rotate(90)">150</text><text x="107" y="62" class="pink">410</text></svg></td>
                  <td class="mono">410+150+410</td><td></td><td class="mono">970</td><td class="mono">21</td><td class="mono">0</td><td class="mono">0</td><td class="mono">0.215</td><td class="mono">4.522</td><td>箍筋</td><td>绑扎</td></tr>
                <tr class="blank"><th class="mono">4</th><td class="name"></td><td></td><td></td><td></td><td></td><td></td><td></td><td></td><td></td><td></td><td></td><td></td><td></td><td></td><td></td></tr>
              </tbody>
            </table>
          </div>
          <div class="vscroll"><svg viewBox="0 0 10 6"><path d="M1 5l4-4 4 4"/></svg><span></span><svg viewBox="0 0 10 6"><path d="M1 1l4 4 4-4"/></svg></div>
        </div>
        <div class="hscroll"><span></span></div>
      </div>
    </section>
  </main>
</div>
</body>
</html>
```

FILE: styles.css
```css
* { box-sizing: border-box; }
html, body { height: 100%; }
body {
  margin: 0;
  display: flex;
  flex-direction: column;
  overflow: hidden;
  background: #f0f0f0;
  color: #111;
  font: 12px/16px "Noto Sans", "Noto Sans CJK SC", sans-serif;
}
button, select { font: inherit; color: inherit; background: none; border: 0; padding: 0; margin: 0; white-space: nowrap; }
button svg { width: 16px; height: 16px; flex: none; display: block; }
.sprite { position: absolute; width: 0; height: 0; }
.mono { font: 10px/12px "DejaVu Sans Mono", "Liberation Mono", monospace; }

/* dropdown triangle */
i { width: 0; height: 0; border: 4px solid transparent; border-top-color: #111; border-bottom-width: 0; flex: none; }
.tb i { margin: 0 -2px; }

/* menu row */
.menubar { position: relative; display: flex; align-items: center; height: 28px; flex: none; padding-left: 2px; }
.menus { display: flex; gap: 1px; margin-right: 3px; }
.menus button { padding: 0 5px; }
.group { display: flex; align-items: center; gap: 1px; }
.tip { margin-left: 34px; color: #167070; text-decoration: none; white-space: nowrap; }
.tip .mono { font-family: "Liberation Sans", sans-serif; font-size: 12px; }
.account { margin-left: 30px; }
.popup { position: absolute; top: 0; left: 972px; width: 203px; height: 5px; border: 1px solid #b9b4d8; border-top: 0; background: #fff; }
.popup::before { content: ""; display: block; width: 21px; height: 4px; background: #f04a1c; border-radius: 0 0 12px 4px; }

/* toolbars */
.mainbar { display: flex; gap: 2px; height: 30px; flex: none; }
.mainbar .bar { height: 29px; padding-left: 1px; }
.bar { display: flex; align-items: center; gap: 1px; height: 27px; padding: 0 3px; background: linear-gradient(#fdfdfd, #f3f3f3); border-radius: 2px; }
.grow { flex: 1; }
.tb { display: flex; align-items: center; gap: 4px; height: 23px; padding: 0 2px; border: 1px solid transparent; }
.tb:disabled { color: #8b8b8b; }
.on { background: #dbeafa; border-color: #2a7cc7; }
.pale { background: #e4effa; }
.deep { background: #abd3f6; }
.split { display: flex; align-items: center; height: 23px; padding: 0 2px 0 1px; }
.more { font: bold 16px/16px "Liberation Sans", sans-serif; padding-bottom: 10px; }
.near { margin: 0 2px 0 14px; }
.far { margin: 0 0 0 33px; }
.end { margin-left: auto; padding-right: 2px; }
.sigma { width: 16px; font: bold 15px/16px "Liberation Serif", serif; text-align: center; }
hr { width: 1px; height: 15px; margin: 0 2px; border: 0; background: #b8b8b8; flex: none; }
.handle { width: 3px; height: 17px; margin: 0 1px 0 0; background: repeating-linear-gradient(#aaa 0 2px, transparent 2px 4px); flex: none; }
.bar > .handle { width: 2px; }
.bar > .wide { margin: 0 2px 0 6px; }
.pick { display: flex; align-items: center; width: 71px; height: 22px; padding-right: 3px; background: #fff; }
.pick select { flex: 1; min-width: 0; appearance: none; padding-left: 2px; }
.short { width: 59px; }

.workspace { flex: 1; min-height: 0; display: flex; gap: 5px; }

/* navigation */
.nav { width: 165px; flex: none; display: flex; flex-direction: column; overflow: hidden; padding-top: 1px; }
.nav h1 { display: flex; align-items: center; gap: 8px; height: 16px; margin: 0; padding-right: 4px; background: #0054e3; color: #fff; font-size: 13px; font-weight: 400; flex: none; }
.nav h1 button:first-of-type { margin-left: auto; }
.nav h1 svg { width: 10px; height: 10px; }
.section { height: 22px; flex: none; border: 1px solid #9c9c9c; border-bottom: 0; border-top-color: #a6a6a6; background: #f0f0f0; }
.last { margin-bottom: -14px; }
.treetools { display: flex; gap: 6px; align-items: center; height: 29px; flex: none; padding: 2px 6px 0; border: 2px solid #9a9a9a; border-bottom: 1px solid #888; background: linear-gradient(#fdfdfd, #f1f1f1); }
.treetools svg { width: 18px; }
.tree { flex: 1; min-height: 0; margin: 0 0 1px; padding: 1px 0 0; list-style: none; overflow: hidden; background: #fff; border: 2px solid #9a9a9a; border-top: 0; border-bottom-width: 1px; }
.tree ul { position: relative; list-style: none; margin: 0; padding: 0 0 0 31px; }
.tree ul::before, .tree ul::after { content: ""; position: absolute; top: 0; bottom: 7px; left: 32px; border-left: 1px dotted #777; }
.tree ul::after { left: 13px; bottom: 0; }
.tree ul li { display: flex; align-items: center; }
.tree ul li::before { content: ""; width: 9px; margin-left: 1px; border-top: 1px dotted #777; }
.row, .leaf { display: flex; align-items: center; height: 16px; white-space: nowrap; }
.row { padding-left: 8px; }
.row svg, .leaf svg { width: 16px; height: 16px; margin-right: 4px; flex: none; }
.leaf { padding: 0 4px 0 2px; }
.leaf .mono { font-size: 11px; }
.chosen { background: #d8d8d8; }
.row s { width: 6px; height: 6px; margin: 0 9px 0 1px; border: solid #999; border-width: 2px 2px 0 0; transform: rotate(45deg); }
.open > .row s { border-color: #333; transform: rotate(135deg); }
.row .after { margin: 0 1px 0 5px; }
.row em { align-self: flex-start; background: #ffe92e; color: #111; font: bold 9px/9px "Liberation Sans", sans-serif; }

/* drawing area */
main { flex: 1; min-width: 0; display: flex; flex-direction: column; }
.line { display: flex; align-items: flex-start; height: 28px; flex: none; }
.line:first-child { height: 27px; }
.line .bar { padding-left: 4px; }
.line .axis { margin-left: 73px; }
.line .stub { margin-left: 5px; width: 33px; }
.snap { height: 32px; padding-top: 1px; }
.canvas { flex: 1; min-height: 0; width: 100%; display: block; background: #000; }
.grid-dark { fill: none; stroke: #8b0008; shape-rendering: crispEdges; }
.grid-red { fill: none; stroke: #d8141c; shape-rendering: crispEdges; }
.bubble circle { fill: none; stroke: #128a18; stroke-dasharray: 4 1; }
.axis-name { fill: #c4c4c4; font: bold 15px "Liberation Sans", sans-serif; text-anchor: middle; }
.axis-name .dim { fill: #7a7a5a; }

/* docked rebar sheet */
.dock { display: flex; height: 184px; flex: none; }
.gutter { width: 12px; flex: none; background: radial-gradient(circle, #bbb 1px, transparent 1px) 1px 12px / 5px 5px; }
.gutter button { display: block; width: 12px; padding-left: 1px; background: #f0f0f0; }
.gutter svg { width: 10px; height: 12px; }
.dockbody { flex: 1; min-width: 0; display: flex; flex-direction: column; padding-right: 2px; }
.records { height: 26px; padding-left: 1px; }
.shut { margin: 0 2px; }
.total { padding-left: 4px; }
.sheet { flex: 1; min-height: 0; display: flex; border: 1px solid #8f8f8f; border-bottom: 0; background: #fff; }
.clip { flex: 1; min-width: 0; overflow: hidden; }
table { width: 1206px; table-layout: fixed; border-collapse: separate; border-spacing: 0; line-height: 13px; }
.w33 { width: 33px; } .w34 { width: 34px; } .w36 { width: 36px; } .w38 { width: 38px; } .w39 { width: 39px; } .w49 { width: 49px; }
.w56 { width: 56px; } .w61 { width: 61px; } .w71 { width: 71px; } .w73 { width: 73px; } .w156 { width: 156px; } .w166 { width: 166px; } .w201 { width: 201px; }
th, td { padding: 0 2px; border-right: 1px solid #a9b3a9; border-bottom: 1px solid #a9b3a9; overflow: hidden; }
th { padding: 0; font-weight: 400; background: linear-gradient(#fff, #f2f2f2); }
thead th { height: 20px; white-space: nowrap; }
thead th:last-child { text-align: left; padding-left: 12px; }
td { background: #ccffd9; text-align: left; }
th.hot { background: #ffd08a; color: #7a1010; }
thead th.hot { background: linear-gradient(#f8c87c, #ffc466); }
td.name { border-right-color: #111; }
td.cell { background: #abe9d8; }
td.mid svg { margin: 0 auto; }
.steel { display: block; width: 12px; height: 12px; }
td.fig { padding: 0; }
.fig svg { display: block; font: 10px "DejaVu Sans Mono", monospace; }
.bar-thick { fill: none; stroke: #111; stroke-width: 2; }
.bar-thin { fill: none; stroke: #111; }
.red { fill: #d01010; }
.pink { fill: #d21fd2; }
.blank th, .blank td { height: 18px; background: #fff; border-bottom: 0; }
.vscroll { width: 16px; flex: none; display: flex; flex-direction: column; align-items: center; background: #f0f0f0; padding: 7px 0 6px; }
.vscroll svg { width: 9px; height: 6px; fill: none; stroke: #444; stroke-width: 2; }
.vscroll span { width: 15px; height: 47px; margin: 4px 0 auto; background: #cdcdcd; }
.hscroll { height: 4px; flex: none; padding: 1px 0 0 19px; background: #f0f0f0; }
.hscroll span { display: block; width: 70%; height: 3px; background: #cacaca; }
```
